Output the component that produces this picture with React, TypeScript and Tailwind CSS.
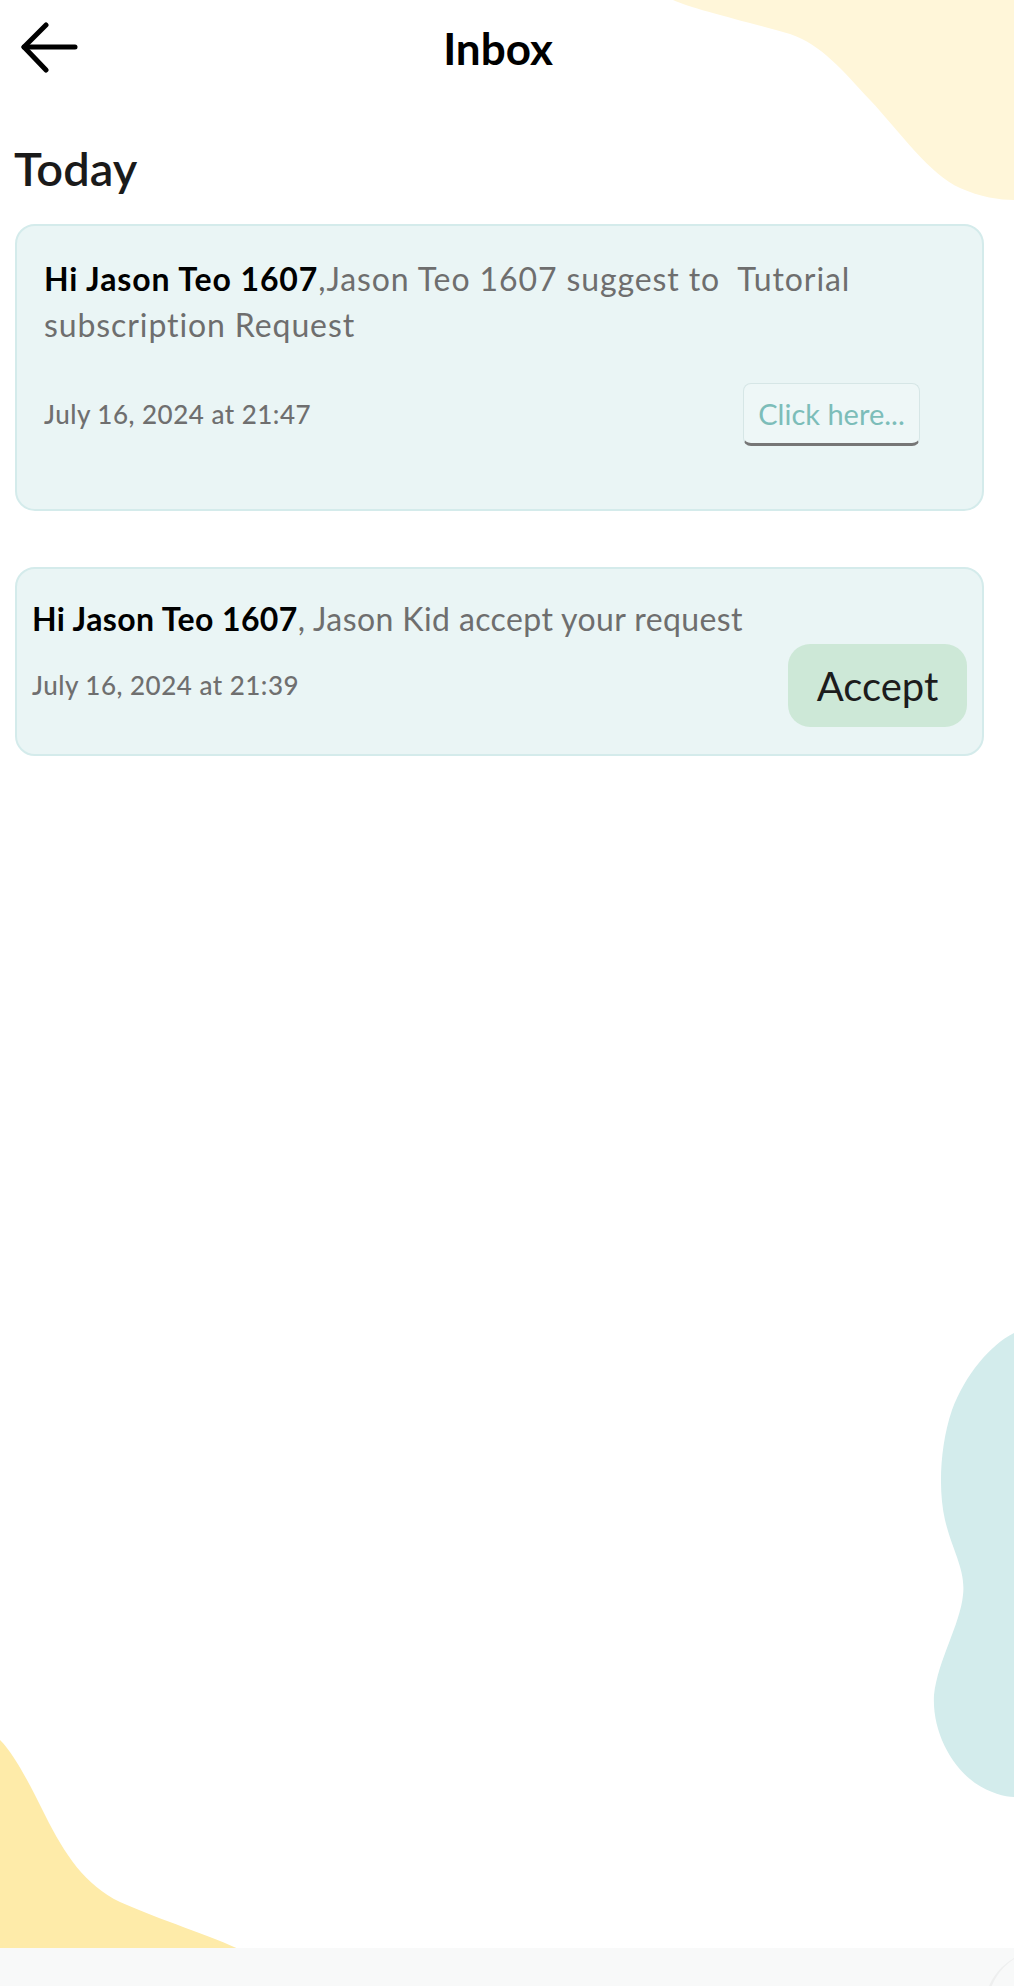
import { ReactNode } from 'react';

// Back chevron used in the header bar.
function BackArrow() {
  return (
    <svg width="58" height="52" viewBox="0 0 58 52" fill="none" stroke="#000" strokeWidth="5" strokeLinecap="round" strokeLinejoin="round">
      <path d="M4 25 H55" />
      <path d="M26 3 L4 25 L26 48" />
    </svg>
  );
}

// Soft coloured shapes that sit behind the page.
function Backdrop() {
  return (
    <svg className="pointer-events-none absolute inset-0 z-0" width="1014" height="1986" viewBox="0 0 1014 1986">
      <path
        d="M673 0 C690 8 740 20 790 34 C822 45 842 70 870 100 C900 132 930 175 960 188 C980 197 1000 200 1014 200 L1014 0 Z"
        fill="#fff6d9"
      />
      <path
        d="M1014 1333 C990 1345 965 1375 952 1410 C940 1445 938 1490 945 1520 C952 1550 966 1570 963 1595 C960 1625 938 1660 934 1695 C932 1730 950 1765 975 1783 C990 1793 1005 1797 1014 1797 Z"
        fill="#d3ecec"
      />
      <path
        d="M0 1740 C15 1755 30 1785 45 1815 C65 1855 85 1885 120 1902 C160 1920 210 1935 245 1952 L245 1986 L0 1986 Z"
        fill="#feeba9"
      />
    </svg>
  );
}

function Greeting({ name, wide, children }: { name: string; wide?: boolean; children: ReactNode }) {
  return (
    <p className={wide ? 'text-[32px] leading-[46px] text-[#6e6e6e] tracking-[0.9px]' : 'text-[32px] leading-[45px] text-[#6e6e6e] tracking-[0.4px]'}>
      <span className="font-bold text-black">{name}</span>
      {children}
    </p>
  );
}

export default function App() {
  return (
    <div className="relative flex min-h-[1986px] w-[1014px] flex-col overflow-hidden bg-white font-['Lato',sans-serif]">
      <Backdrop />

      <div className="relative z-10 flex-1">
        <header className="flex items-center pt-[22px] pl-[20px] pr-[96px]">
          <BackArrow />
          <h1 className="flex-1 text-center text-[44px] leading-[52px] font-bold text-black">Inbox</h1>
        </header>

        <h2 className="mt-[67px] pl-[14px] text-[47px] leading-[54px] font-semibold text-[#1a1a1a]">Today</h2>

        <div className="mt-[29px] ml-[15px] w-[969px] rounded-[20px] border-2 border-[#d4ebeb] bg-[#eaf5f5] pt-[30px] pr-[27px] pb-[63px] pl-[27px]">
          <Greeting name="Hi Jason Teo 1607" wide>,Jason Teo 1607 suggest to{'\u00a0'} Tutorial subscription Request</Greeting>
          <div className="mt-[35px] mr-[35px] flex items-center justify-between">
            <span className="text-[26px] font-medium tracking-[0.5px] text-[#6f6f6f]">July 16, 2024 at 21:47</span>
            <button className="flex h-[63px] w-[177px] items-center justify-center rounded-[8px] border border-b-[3px] border-[#d6e6e6] border-b-[#767676] bg-[#eef7f7] text-[29px] text-[#7cbdb9]">
              Click here...
            </button>
          </div>
        </div>

        <div className="mt-[56px] ml-[15px] w-[969px] rounded-[20px] border-2 border-[#d4ebeb] bg-[#eaf5f5] pt-[27px] pr-[15px] pb-[27px] pl-[15px]">
          <Greeting name="Hi Jason Teo 1607">, Jason Kid accept your request</Greeting>
          <div className="mt-[3px] flex items-center justify-between">
            <span className="text-[26px] font-medium tracking-[0.5px] text-[#6f6f6f]">July 16, 2024 at 21:39</span>
            <button className="flex h-[83px] w-[179px] items-center justify-center rounded-[22px] bg-[#cde8d7] text-[40px] text-[#1c1c1c]">
              Accept
            </button>
          </div>
        </div>
      </div>

      <div className="relative z-10 h-[38px] overflow-hidden bg-[#f8f9f9]">
        <div className="absolute top-[2px] right-[-110px] h-[120px] w-[140px] rounded-full border-l-[3px] border-[#eeefef]" />
      </div>
    </div>
  );
}
